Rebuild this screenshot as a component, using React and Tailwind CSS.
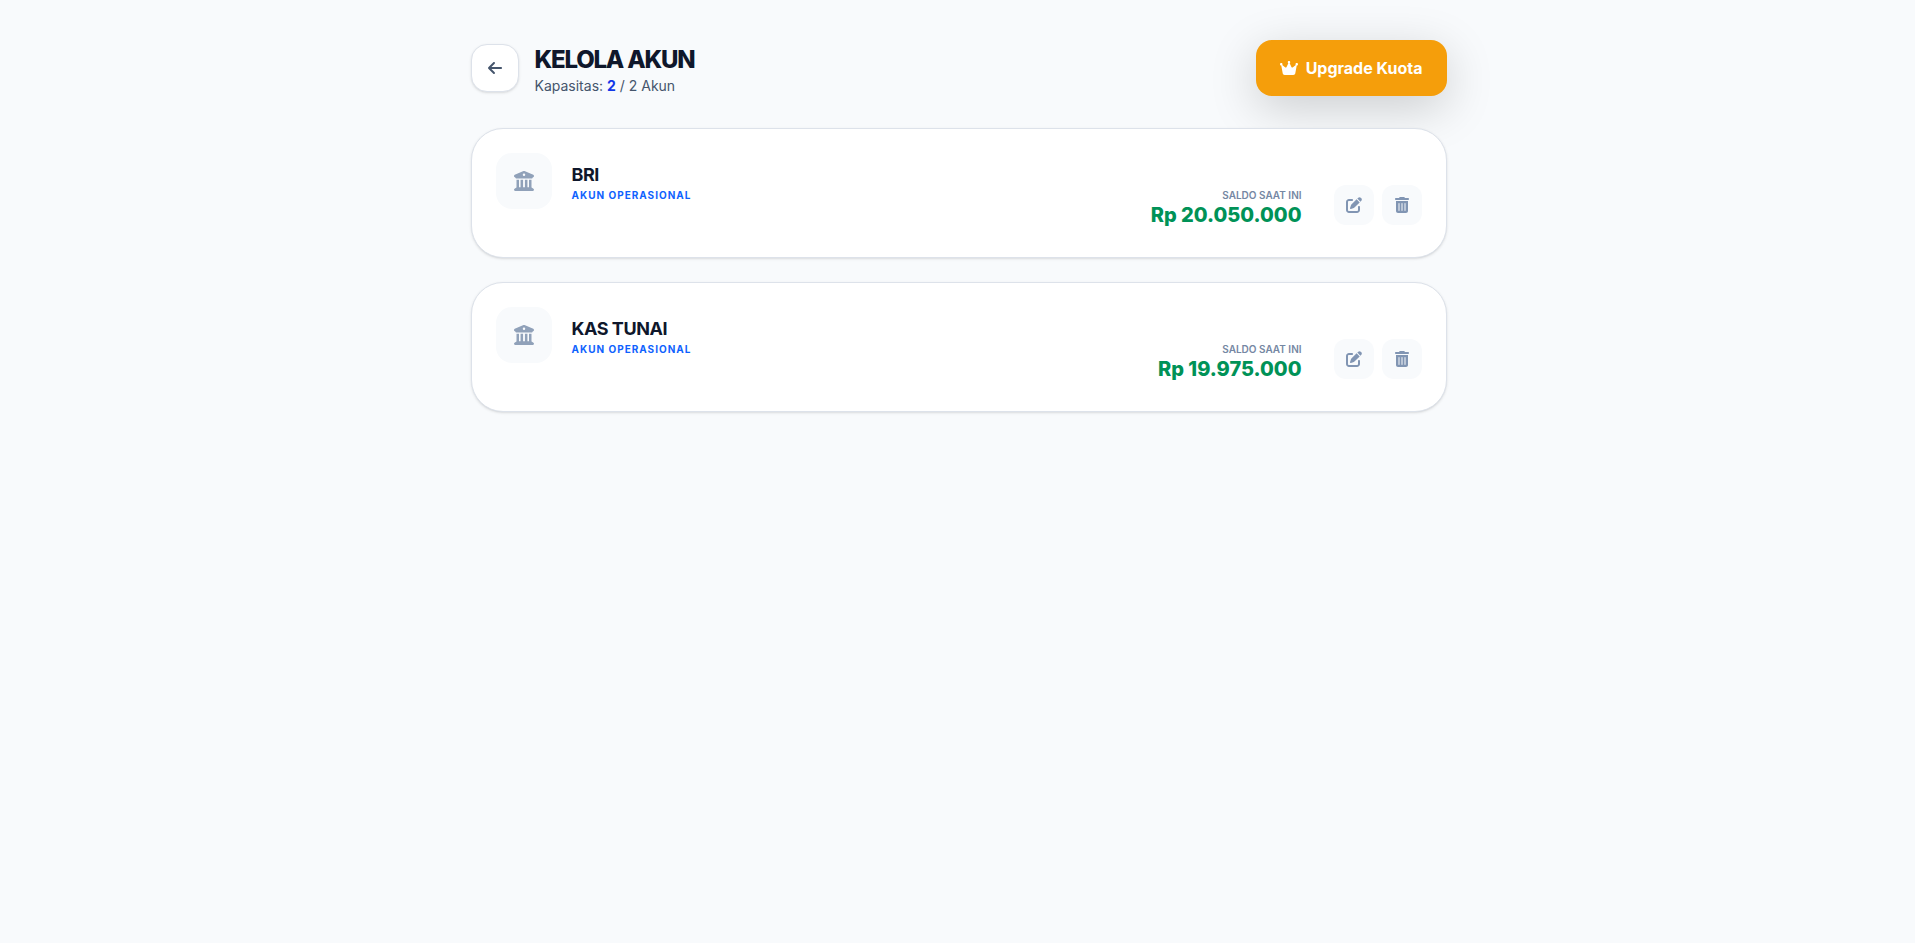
import React from "react";
import { FaArrowLeft, FaBuildingColumns, FaCrown, FaPenToSquare, FaTrashCan } from "react-icons/fa6";

const accounts = [
  { id: 1, name: "BRI", balance: 20050000 },
  { id: 2, name: "KAS TUNAI", balance: 19975000 },
];

const MAX_ACCOUNTS = 2;

const formatRupiah = (value) => {
  return "Rp " + String(value).replace(/\B(?=(\d{3})+(?!\d))/g, ".");
};

function AccountCard({ account }) {
  return (
    <div className="relative flex items-start justify-between p-6 bg-white border border-[#dde2ea] rounded-[32px] shadow-sm">
      <div className="flex items-center gap-5">
        <div className="w-14 h-14 rounded-2xl bg-slate-50 flex items-center justify-center text-xl text-slate-400">
          <FaBuildingColumns />
        </div>
        <div className="pt-1">
          <h2 className="text-lg leading-6 font-bold tracking-tight text-slate-900">{account.name}</h2>
          <p className="text-[10px] leading-4 font-bold tracking-widest text-[#0f62fe]">AKUN OPERASIONAL</p>
        </div>
      </div>

      <div className="flex items-center gap-8 pt-8 pb-2">
        <div className="text-right -my-1 pt-1">
          <p className="text-[10px] leading-4 font-semibold text-[#7587a3]">SALDO SAAT INI</p>
          <p className="text-xl leading-6 font-extrabold text-[#009257]">{formatRupiah(account.balance)}</p>
        </div>
        <div className="flex gap-2">
          <button
            aria-label={`Edit ${account.name}`}
            className="w-10 h-10 rounded-xl bg-slate-50 flex items-center justify-center text-[#8195b3] hover:text-blue-600 transition-colors"
          >
            <FaPenToSquare />
          </button>
          <button
            aria-label={`Hapus ${account.name}`}
            className="w-10 h-10 rounded-xl bg-slate-50 flex items-center justify-center text-[#8195b3] hover:text-red-600 transition-colors"
          >
            <FaTrashCan />
          </button>
        </div>
      </div>
    </div>
  );
}

function App() {
  return (
    <div className="min-h-screen bg-slate-50 pl-0.5 font-['Inter',sans-serif]">
      <main className="max-w-5xl mx-auto px-6 py-10">
        <header className="flex items-center justify-between mb-8">
          <div className="flex items-center gap-4">
            <a
              href="#"
              aria-label="Kembali"
              className="w-12 h-12 rounded-2xl bg-white border border-[#dde2ea] shadow-sm flex items-center justify-center text-slate-600"
            >
              <FaArrowLeft />
            </a>
            <div className="pt-1">
              <h1 className="text-2xl leading-8 font-extrabold tracking-tighter text-slate-900">KELOLA AKUN</h1>
              <p className="text-sm text-slate-600">
                Kapasitas: <span className="font-bold text-[#1238e8]">{accounts.length}</span> / {MAX_ACCOUNTS} Akun
              </p>
            </div>
          </div>
          <button className="h-14 px-6 rounded-2xl bg-[#f59e0b] text-white font-bold flex items-center gap-2 shadow-[0_12px_48px_rgba(0,0,0,0.18)]">
            <FaCrown className="text-lg" />
            Upgrade Kuota
          </button>
        </header>

        <div className="space-y-6">
          {accounts.map((account) => (
            <AccountCard key={account.id} account={account} />
          ))}
        </div>
      </main>
    </div>
  );
}

export default App;
